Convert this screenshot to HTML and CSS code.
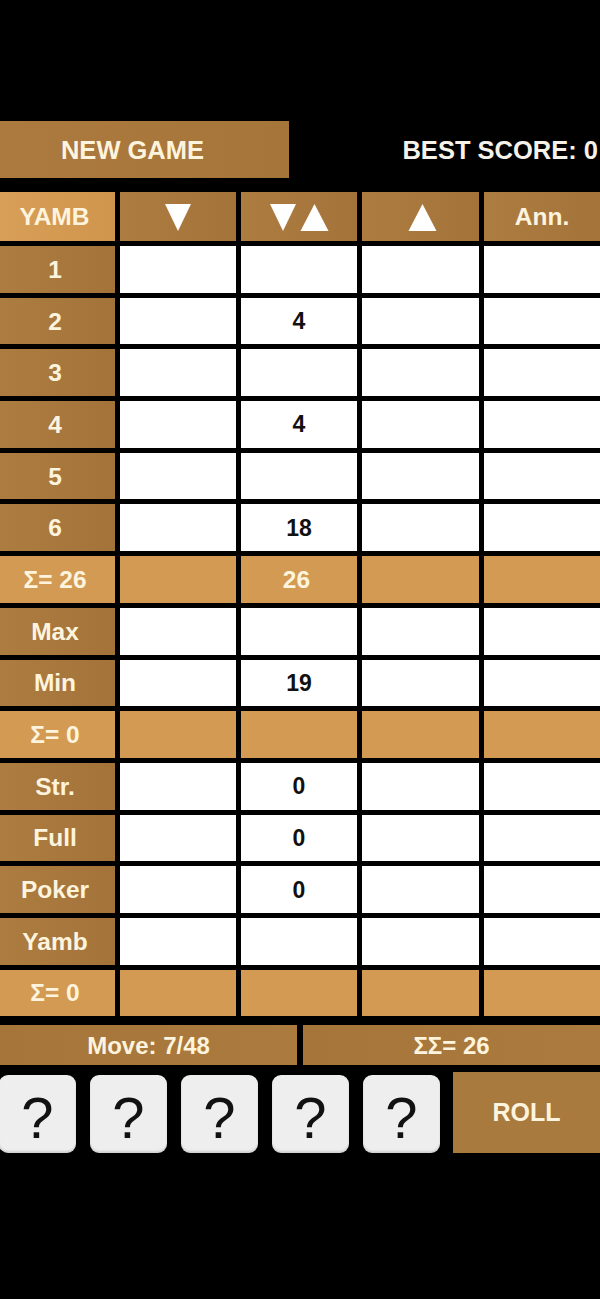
FILE: index.html
```html
<!DOCTYPE html>
<html lang="en">
<head>
    <meta charset="UTF-8">
    <meta name="viewport" content="width=device-width, initial-scale=1.0">
    <title>Yamb</title>
    <link rel="stylesheet" href="styles.css">
</head>
<body>

<div class="top">
    <button class="new-game" type="button">NEW GAME</button>
    <div class="best">BEST SCORE: 0</div>
</div>

<div id="sheet" class="sheet">
    <div class="cell head yamb">YAMB</div>
    <div class="cell head">
        <svg class="arrow" viewBox="0 0 26 27"><polygon points="0,0 26,0 13,27" fill="#fff"/></svg>
    </div>
    <div class="cell head">
        <svg class="arrow" viewBox="0 0 26 27"><polygon points="0,0 26,0 13,27" fill="#fff"/></svg>
        <svg class="arrow up" viewBox="0 0 28 27"><polygon points="14,0 28,27 0,27" fill="#fff"/></svg>
    </div>
    <div class="cell head">
        <svg class="arrow up" viewBox="0 0 28 27"><polygon points="14,0 28,27 0,27" fill="#fff"/></svg>
    </div>
    <div class="cell head">Ann.</div>
</div>

<div class="status">
    <div class="bar">Move: 7/48</div>
    <div class="bar">ΣΣ= 26</div>
</div>

<div class="dice">
    <div class="die">?</div>
    <div class="die">?</div>
    <div class="die">?</div>
    <div class="die">?</div>
    <div class="die">?</div>
    <button class="roll" type="button">ROLL</button>
</div>

<script>
    // Score rows: label, values for the four columns, and whether it is a sum row
    const rows = [
        ['1', ['', '', '', '']],
        ['2', ['', '4', '', '']],
        ['3', ['', '', '', '']],
        ['4', ['', '4', '', '']],
        ['5', ['', '', '', '']],
        ['6', ['', '18', '', '']],
        ['Σ= 26', ['', '26', '', ''], true],
        ['Max', ['', '', '', '']],
        ['Min', ['', '19', '', '']],
        ['Σ= 0', ['', '', '', ''], true],
        ['Str.', ['', '0', '', '']],
        ['Full', ['', '0', '', '']],
        ['Poker', ['', '0', '', '']],
        ['Yamb', ['', '', '', '']],
        ['Σ= 0', ['', '', '', ''], true]
    ];

    const sheet = document.getElementById('sheet');
    rows.forEach(function (row) {
        const label = document.createElement('div');
        label.className = row[2] ? 'cell sum' : 'cell label';
        label.textContent = row[0];
        sheet.appendChild(label);

        row[1].forEach(function (value) {
            const cell = document.createElement('div');
            cell.className = row[2] ? 'cell sum' : 'cell score';
            cell.textContent = value;
            sheet.appendChild(cell);
        });
    });
</script>

</body>
</html>
```

FILE: styles.css
```css
body {
    margin: 0;
    background-color: #000;
    font-family: "Liberation Sans", Arial, sans-serif;
    font-weight: bold;
    color: #fdf4de;
}
.top {
    display: flex;
    align-items: center;
    justify-content: space-between;
    padding-top: 121px;
}
.new-game {
    width: 289px;
    height: 57px;
    border: none;
    background: linear-gradient(90deg, #ac7a3e, #a6753a);
    color: #fdf4de;
    font-family: inherit;
    font-weight: bold;
    font-size: 25.5px;
    padding: 2px 24px 0 0;
}
.best {
    font-size: 25.5px;
    padding: 2px 2px 0 0;
    color: #f6f2ea;
}
.sheet {
    display: grid;
    grid-template-columns: 115px 116px 116px 117px 1fr;
    grid-template-rows: 49px;
    grid-auto-rows: 46.7px;
    column-gap: 5px;
    row-gap: 5px;
    margin-top: 14px;
}
.cell {
    display: flex;
    align-items: center;
    justify-content: center;
    font-size: 24.5px;
    padding-top: 1px;
}
.label, .sum {
    padding-right: 5px;
}
.head, .label {
    background: linear-gradient(90deg, #ad7c40, #a4733a);
}
.head.yamb {
    background: linear-gradient(90deg, #d89f58, #cf954d);
    padding-right: 6px;
}
.sum {
    background-color: #d39a53;
}
.score {
    background-color: #fff;
    color: #111;
    font-size: 23px;
}
.arrow {
    width: 26px;
    height: 27px;
}
.arrow.up {
    width: 29px;
    margin-left: 4px;
}
.status {
    display: flex;
    gap: 6px;
    margin-top: 9px;
}
.bar {
    flex: 1;
    height: 40px;
    display: flex;
    align-items: center;
    justify-content: center;
    font-size: 24px;
    padding-top: 2px;
    box-sizing: border-box;
    background: linear-gradient(90deg, #a6753a, #ab7a3e);
}
.dice {
    display: flex;
    align-items: flex-start;
    gap: 14px;
    margin-top: 7px;
}
.die {
    width: 77px;
    height: 78px;
    margin-top: 3px;
    border-radius: 9px;
    background-color: #eeeeee;
    box-shadow: inset 0 -2px 2px rgba(0, 0, 0, 0.12);
    color: #111;
    display: flex;
    align-items: center;
    justify-content: center;
    font-weight: normal;
    font-size: 58px;
    padding-top: 6px;
    box-sizing: border-box;
}
.die:first-child {
    margin-left: -1px;
}
.roll {
    flex: 1;
    height: 81px;
    margin-left: -1px;
    border: none;
    padding: 0;
    background-color: #a97a3e;
    color: #fdf4de;
    font-family: inherit;
    font-weight: bold;
    font-size: 25px;
}
```
